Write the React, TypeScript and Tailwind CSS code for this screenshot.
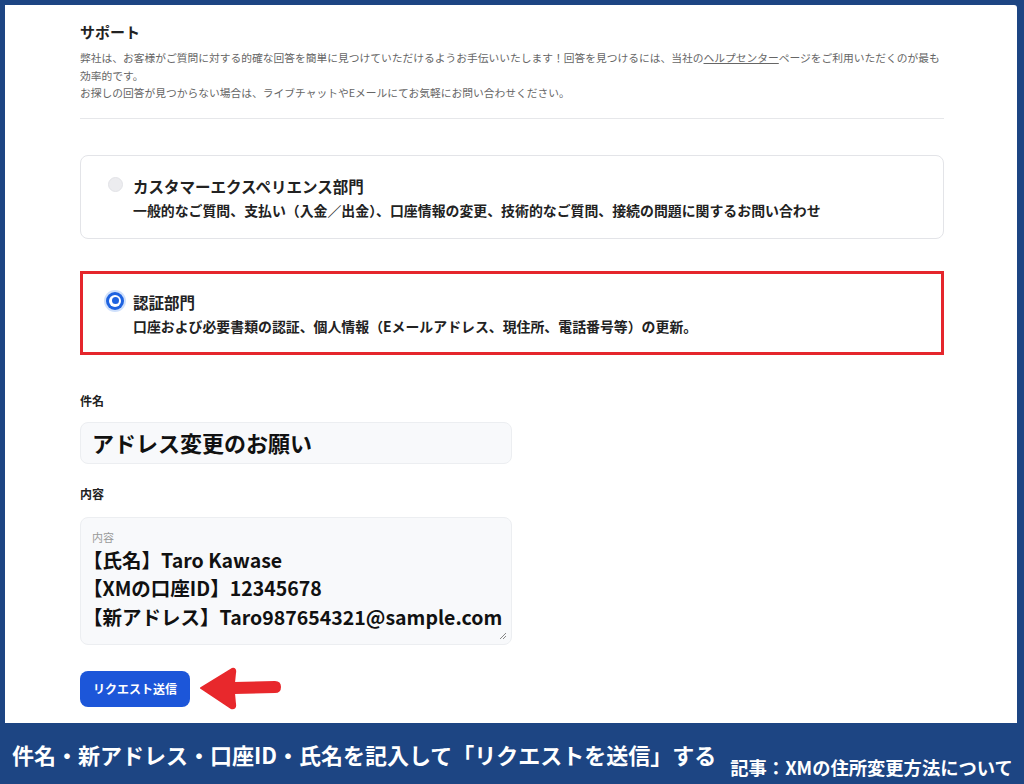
import { useState } from "react";

const jp = "font-['Noto_Sans_CJK_JP','Noto_Sans',sans-serif]";

const Radio = ({ checked }: { checked: boolean }) =>
  checked ? (
    <span className="flex h-[22px] w-[22px] shrink-0 items-center justify-center rounded-full bg-[#cfe0fb]">
      <span className="flex h-[18px] w-[18px] items-center justify-center rounded-full bg-[#1f63e0]">
        <span className="flex h-[12px] w-[12px] items-center justify-center rounded-full bg-white">
          <span className="h-[7px] w-[7px] rounded-full bg-[#1f63e0]" />
        </span>
      </span>
    </span>
  ) : (
    <span className="flex h-[22px] w-[22px] shrink-0 items-center justify-center">
      <span className="h-[15px] w-[15px] rounded-full border border-[#e2e3e7] bg-[#ececef]" />
    </span>
  );

const DeptCard = ({
  title,
  desc,
  checked,
  onClick,
}: {
  title: string;
  desc: string;
  checked: boolean;
  onClick: () => void;
}) => (
  <div
    onClick={onClick}
    className={
      checked
        ? "h-[84px] border-[3px] border-[#e5262c] bg-white pl-[21px] pt-[18px]"
        : "h-[84px] rounded-[8px] border border-[#e3e4e8] bg-white pl-[23px] pt-[20px]"
    }
  >
    <div className="flex items-start gap-[7px]">
      <div className="mt-[-2px]">
        <Radio checked={checked} />
      </div>
      <div className="flex flex-col">
        <div className="text-[15.5px] font-bold leading-[20px] text-[#222]">{title}</div>
        <div className="mt-[4px] text-[13.9px] font-semibold leading-[20px] text-[#222]">{desc}</div>
      </div>
    </div>
  </div>
);

const Arrow = () => (
  <svg width="84" height="44" viewBox="0 0 84 44" className="ml-[9px]">
    <path
      d="M2 21 L33 2 Q37 1 36 6 L35 16 L76 15 Q81 15 81 20 Q81 25 76 25 L35 26 L36 37 Q37 42 32 41 Z"
      fill="#e8282c"
      stroke="#e8282c"
      strokeWidth="2"
      strokeLinejoin="round"
    />
  </svg>
);

export default function App() {
  const [dept, setDept] = useState(1);
  return (
    <div className={`flex h-[784px] w-[1024px] flex-col bg-[#1d4583] ${jp}`}>
      <div className="mx-[5px] mr-[7px] mt-[5px] h-[718px] rounded-tr-[3px] bg-white pl-[75px] pt-[15px]">
        <div className="w-[864px]">
          <h1 className="text-[15px] font-semibold leading-[24px] text-[#222]">サポート</h1>
          <p className="mt-[5px] whitespace-nowrap text-[10.75px] leading-[17.5px] text-[#666]">
            弊社は、お客様がご質問に対する的確な回答を簡単に見つけていただけるようお手伝いいたします！回答を見つけるには、当社の
            <span className="underline">ヘルプセンター</span>
            ページをご利用いただくのが最も
            <br />
            効率的です。
            <br />
            お探しの回答が見つからない場合は、ライブチャットやEメールにてお気軽にお問い合わせください。
          </p>
          <div className="mt-[16px] h-px bg-[#e6e7ea]" />

          <div className="mt-[36px] flex flex-col gap-[32px]">
            <DeptCard
              title="カスタマーエクスペリエンス部門"
              desc="一般的なご質問、支払い（入金／出金）、口座情報の変更、技術的なご質問、接続の問題に関するお問い合わせ"
              checked={dept === 0}
              onClick={() => setDept(0)}
            />
            <DeptCard
              title="認証部門"
              desc="口座および必要書類の認証、個人情報（Eメールアドレス、現住所、電話番号等）の更新。"
              checked={dept === 1}
              onClick={() => setDept(1)}
            />
          </div>

          <div className="mt-[38px] text-[12px] font-bold leading-[16px] text-[#222]">件名</div>
          <div className="mt-[13px] flex h-[42px] w-[432px] items-center rounded-[8px] border border-[#eceef1] bg-[#f8f9fb] pl-[11px]">
            <span className="text-[22px] font-bold text-[#111]">アドレス変更のお願い</span>
          </div>

          <div className="mt-[22px] text-[12px] font-bold leading-[16px] text-[#222]">内容</div>
          <div className="relative mt-[15px] h-[128px] w-[432px] rounded-[8px] border border-[#eceef1] bg-[#f8f9fb] pt-[11px]">
            <div className="pl-[11px] text-[11px] leading-[16px] text-[#999]">内容</div>
            <div className="mt-[1px] pl-[2px] text-[19.5px] font-semibold leading-[28.5px] text-[#111]">
              <div>【氏名】Taro Kawase</div>
              <div>【XMの口座ID】12345678</div>
              <div>【新アドレス】Taro987654321@sample.com</div>
            </div>
            <svg width="8" height="8" viewBox="0 0 8 8" className="absolute bottom-[4px] right-[4px]">
              <path d="M7 1 L1 7 M7 4 L4 7" stroke="#888" strokeWidth="1" />
            </svg>
          </div>

          <div className="mt-[22px] flex items-center">
            <button className="h-[36px] w-[110px] rounded-[8px] bg-[#1c56d9] text-[12px] font-bold text-white">
              リクエスト送信
            </button>
            <Arrow />
          </div>
        </div>
      </div>
      <div className="flex flex-1 items-center pl-[12px] text-white">
        <span className="text-[22px] font-bold leading-[28px]">
          件名・新アドレス・口座ID・氏名を記入して「リクエストを送信」する
        </span>
        <span className="ml-[14px] mt-[26px] text-[18.3px] font-bold leading-[22px]">
          記事：XMの住所変更方法について
        </span>
      </div>
    </div>
  );
}
